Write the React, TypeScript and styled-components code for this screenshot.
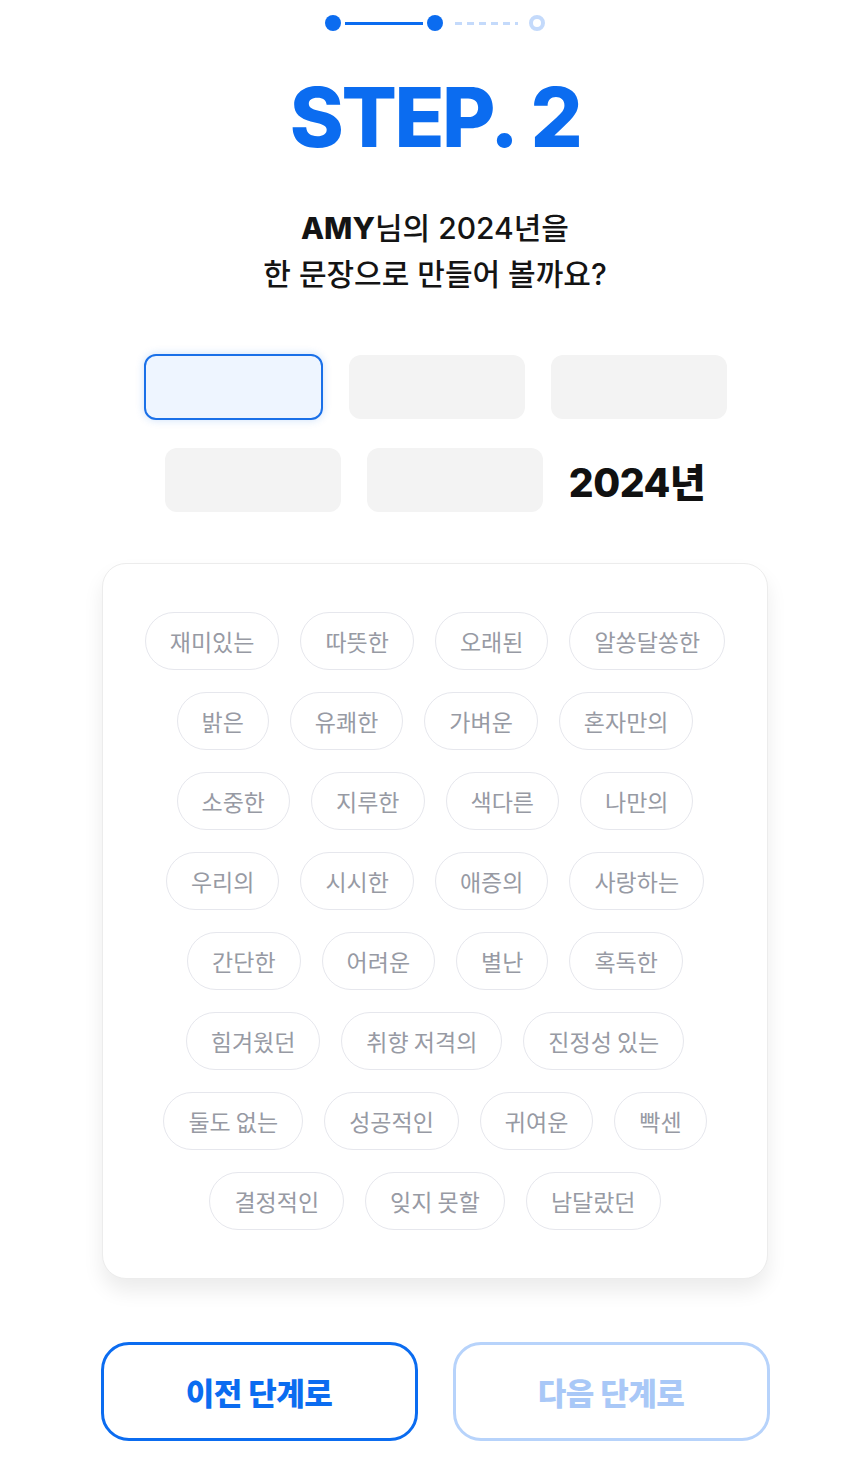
import React from 'react';
import styled, { createGlobalStyle } from 'styled-components';

const GlobalStyle = createGlobalStyle`
  body {
    margin: 0;
    background: #fff;
    font-family: Inter, "Noto Sans CJK KR", sans-serif;
  }
`;

const blue = '#0b6cf0';
const paleBlue = '#b7d3fb';

const words = [
  '재미있는', '따뜻한', '오래된', '알쏭달쏭한',
  '밝은', '유쾌한', '가벼운', '혼자만의',
  '소중한', '지루한', '색다른', '나만의',
  '우리의', '시시한', '애증의', '사랑하는',
  '간단한', '어려운', '별난', '혹독한',
  '힘겨웠던', '취향 저격의', '진정성 있는',
  '둘도 없는', '성공적인', '귀여운', '빡센',
  '결정적인', '잊지 못할', '남달랐던',
];

const Page = styled.div`
  width: 100%;
  display: flex;
  flex-direction: column;
  align-items: center;
  padding: 15px 0 20px 23px;
  box-sizing: border-box;
`;

const Progress = styled.div`
  display: flex;
  align-items: center;
  height: 16px;
`;

const Dot = styled.span`
  width: 16px;
  height: 16px;
  border-radius: 50%;
  background: ${blue};
`;

const HollowDot = styled.span`
  width: 16px;
  height: 16px;
  box-sizing: border-box;
  border-radius: 50%;
  border: 4px solid #c4dafb;
  background: #fff;
`;

const Line = styled.span<{ $dashed?: boolean }>`
  height: 3px;
  width: ${({ $dashed }) => ($dashed ? '63px' : '78px')};
  margin: ${({ $dashed }) => ($dashed ? '0 11px 0 12px' : '0 4px')};
  background: ${({ $dashed }) =>
    $dashed
      ? `repeating-linear-gradient(90deg, #c4dafb 0 7px, transparent 7px 12px)`
      : blue};
`;

const Title = styled.h1`
  margin: 46px 0 0;
  font-size: 82px;
  line-height: 1;
  font-weight: 800;
  letter-spacing: -2.5px;
  word-spacing: 2px;
  color: ${blue};
`;

const Subtitle = styled.p`
  margin: 46px 0 0;
  font-size: 30px;
  line-height: 46px;
  font-weight: 500;
  color: #141414;
  text-align: center;
  b {
    font-weight: 800;
  }
`;

const Blanks = styled.div`
  margin-top: 57px;
  display: flex;
  flex-direction: column;
  align-items: center;
  gap: 28px;
`;

const BlankRow = styled.div`
  display: flex;
  align-items: center;
  gap: 26px;
`;

const Blank = styled.div<{ $active?: boolean }>`
  width: ${({ $active }) => ($active ? '179px' : '176px')};
  height: ${({ $active }) => ($active ? '66px' : '64px')};
  box-sizing: border-box;
  border-radius: 12px;
  background: ${({ $active }) => ($active ? '#eef5ff' : '#f3f3f3')};
  border: 2px solid ${({ $active }) => ($active ? '#1a70e8' : 'transparent')};
  box-shadow: ${({ $active }) =>
    $active ? '0 0 8px rgba(26, 112, 232, 0.22)' : 'none'};
`;

const Year = styled.span`
  font-size: 39px;
  font-weight: 800;
  color: #111;
  letter-spacing: -0.5px;
`;

const Card = styled.div`
  margin-top: 51px;
  width: 666px;
  box-sizing: border-box;
  padding: 48px 40px;
  border: 1px solid #ececec;
  border-radius: 24px;
  background: #fff;
  box-shadow: 0 12px 20px rgba(0, 0, 0, 0.08);
  display: flex;
  flex-wrap: wrap;
  justify-content: center;
  gap: 22px 21px;
`;

const Chip = styled.button`
  height: 58px;
  padding: 0 24px;
  border: 1.5px solid #e6e7ed;
  border-radius: 29px;
  background: #fff;
  font-family: "Noto Sans CJK KR", sans-serif;
  font-size: 23px;
  color: #979aa4;
  cursor: pointer;
`;

const Actions = styled.div`
  margin-top: 63px;
  display: flex;
  gap: 35px;
`;

const StepButton = styled.button<{ $disabled?: boolean }>`
  width: 317px;
  height: 99px;
  border-radius: 28px;
  background: #fff;
  border: 3px solid ${({ $disabled }) => ($disabled ? paleBlue : blue)};
  color: ${({ $disabled }) => ($disabled ? '#a9c8f7' : blue)};
  font-family: "Noto Sans CJK KR", sans-serif;
  font-size: 31px;
  font-weight: 800;
  letter-spacing: -0.5px;
`;

export default function App() {
  return (
    <Page>
      <GlobalStyle />
      <Progress>
        <Dot />
        <Line />
        <Dot />
        <Line $dashed />
        <HollowDot />
      </Progress>
      <Title>STEP. 2</Title>
      <Subtitle>
        <b>AMY</b>님의 2024년을
        <br />한 문장으로 만들어 볼까요?
      </Subtitle>
      <Blanks>
        <BlankRow>
          <Blank $active />
          <Blank />
          <Blank />
        </BlankRow>
        <BlankRow>
          <Blank />
          <Blank />
          <Year>2024년</Year>
        </BlankRow>
      </Blanks>
      <Card>
        {words.map((w) => (
          <Chip key={w}>{w}</Chip>
        ))}
      </Card>
      <Actions>
        <StepButton>이전 단계로</StepButton>
        <StepButton $disabled>다음 단계로</StepButton>
      </Actions>
    </Page>
  );
}
